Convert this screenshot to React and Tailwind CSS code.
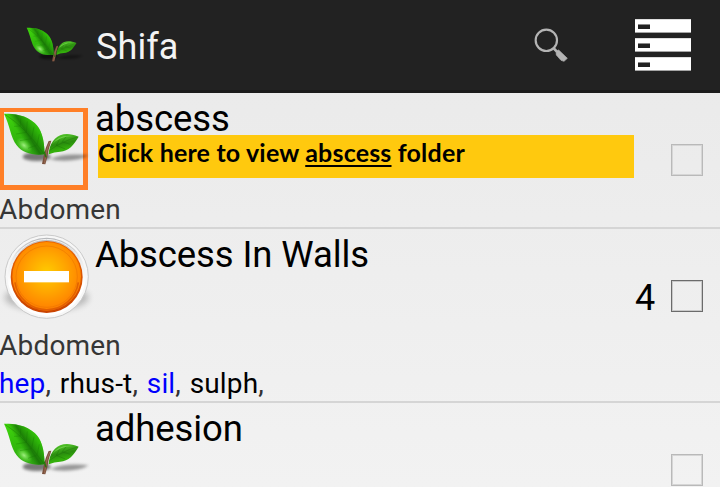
import React, { useId } from 'react';

const roboto = "font-['Roboto',sans-serif]";

const BIG_LEAF =
  'M12 17C44 17 78 21 104 45C124 64 133 92 134 139C96 143 68 135 50 112C32 89 29 50 12 17Z';

function Leaves({ className }) {
  const id = useId();
  return (
    <svg viewBox="0 0 270 180" className={className} aria-hidden="true">
      <defs>
        <linearGradient id={id + 'big'} x1="0.2" y1="0" x2="0.6" y2="1">
          <stop offset="0" stopColor="#3fd50c" />
          <stop offset="0.45" stopColor="#33bb0c" />
          <stop offset="1" stopColor="#2fa812" />
        </linearGradient>
        <linearGradient id={id + 'edge'} x1="0.15" y1="0.75" x2="0.85" y2="0.3">
          <stop offset="0.4" stopColor="#167205" stopOpacity="0" />
          <stop offset="0.6" stopColor="#126405" stopOpacity="0.7" />
          <stop offset="1" stopColor="#35d307" stopOpacity="0.6" />
        </linearGradient>
        <radialGradient id={id + 'shine'}>
          <stop offset="0" stopColor="#a6f287" stopOpacity="0.95" />
          <stop offset="1" stopColor="#63dc36" stopOpacity="0" />
        </radialGradient>
        <linearGradient id={id + 'small'} x1="0.2" y1="0" x2="0.5" y2="1">
          <stop offset="0" stopColor="#58cf2c" />
          <stop offset="0.5" stopColor="#2a8d0e" />
          <stop offset="0.8" stopColor="#35b30b" />
          <stop offset="1" stopColor="#248408" />
        </linearGradient>
        <filter id={id + 'blur'} x="-20%" y="-60%" width="140%" height="220%">
          <feGaussianBlur stdDeviation="5" />
        </filter>
      </defs>
      <g filter={`url(#${id}blur)`} fill="#000">
        <ellipse cx="110" cy="146" rx="42" ry="13" opacity="0.5" />
        <path d="M150 153Q195 134 266 142Q235 162 168 157Z" opacity="0.38" />
      </g>
      <path d={BIG_LEAF} fill={`url(#${id}big)`} />
      <path d={BIG_LEAF} fill={`url(#${id}edge)`} />
      <ellipse cx="72" cy="112" rx="29" ry="18" transform="rotate(42 72 112)" fill={`url(#${id}shine)`} />
      <g fill="none" stroke="#157005" strokeWidth="1.5" opacity="0.6">
        <path d="M16 20Q75 57 132 138" strokeWidth="2" />
        <path d="M61 54L62 32M79 73L82 40M95 92L102 56M111 111L118 79M61 54L42 55M79 73L49 78M95 92L60 98M111 111L84 121" />
      </g>
      <path d="M126 168L131 143Q136 119 146 99L154 98Q145 123 142 147L136 169Z" fill="#79503c" />
      <path d="M134 166Q137 127 150 101" stroke="#b17b61" strokeWidth="2" fill="none" />
      <path d="M147 128C155 89 185 64 236 86C221 111 207 129 180 131Q163 132 146 139Z" fill={`url(#${id}small)`} />
      <path d="M149 127Q187 99 233 87M169 112L181 89M185 103L200 84M169 112L196 123M188 102L211 109" stroke="#18680a" strokeWidth="1.6" fill="none" opacity="0.65" />
      <path d="M157 108Q175 79 220 84Q182 84 157 108Z" fill="#82df5e" opacity="0.65" />
      <path d="M133 131L138 148" stroke="#237a0c" strokeWidth="4" />
    </svg>
  );
}

function MinusBadge() {
  return (
    <svg viewBox="0 0 282 282" className="block h-[94px] w-[94px] max-w-none" aria-hidden="true">
      <defs>
        <radialGradient id="orange" cx="0.5" cy="0.45" r="0.56">
          <stop offset="0" stopColor="#ffcc00" />
          <stop offset="0.5" stopColor="#ffa600" />
          <stop offset="1" stopColor="#ff7c00" />
        </radialGradient>
        <linearGradient id="silver" x1="0" y1="0" x2="0" y2="1">
          <stop offset="0" stopColor="#b4b6b9" />
          <stop offset="0.25" stopColor="#e9e9e9" />
          <stop offset="0.6" stopColor="#ffffff" />
        </linearGradient>
        <linearGradient id="rim" x1="0" y1="0" x2="0" y2="1">
          <stop offset="0" stopColor="#ea6500" />
          <stop offset="1" stopColor="#c94300" />
        </linearGradient>
        <filter id="soft" x="-20%" y="-50%" width="140%" height="200%">
          <feGaussianBlur stdDeviation="9" />
        </filter>
      </defs>
      <ellipse cx="140" cy="206" rx="126" ry="40" fill="#000" opacity="0.22" filter="url(#soft)" />
      <circle cx="140" cy="143" r="125" fill="#f7f7f7" stroke="#cacaca" strokeWidth="3" />
      <circle cx="140" cy="143" r="117" fill="url(#silver)" />
      <path d="M49 78A112 112 0 0 1 231 78" fill="none" stroke="#f4f4f4" strokeWidth="3" />
      <circle cx="140" cy="144" r="108" fill="url(#rim)" />
      <circle cx="140" cy="142" r="103" fill="url(#orange)" />
      <path d="M45 160A96 96 0 0 0 235 160" fill="none" stroke="#cf4a00" strokeWidth="5" opacity="0.6" />
      <circle cx="140" cy="143" r="92" fill="none" stroke="#e87000" strokeWidth="3" opacity="0.5" />
      <rect x="72" y="126" width="135" height="34" fill="#fff" />
    </svg>
  );
}

function Check({ active }) {
  return (
    <span
      role="checkbox"
      aria-checked="false"
      className={
        active
          ? 'block h-8 w-8 shrink-0 border border-[#6b6b6b] shadow-[inset_0_0_0_1px_#c9c9c9]'
          : 'block h-8 w-8 shrink-0 border border-[#b9b9b9] shadow-[inset_0_0_0_1px_#d6d6d6]'
      }
    />
  );
}

function SearchIcon() {
  return (
    <svg viewBox="0 0 102 102" className="h-[34px] w-[34px]" aria-hidden="true">
      <circle cx="37" cy="37" r="32" fill="none" stroke="#b4b4b4" strokeWidth="6.5" />
      <path d="M58 60L68 70" stroke="#b4b4b4" strokeWidth="8" />
      <path d="M66 70L74 66L100 91L90 100L81 97L67 81Z" fill="#b4b4b4" stroke="#b4b4b4" strokeWidth="2" strokeLinejoin="round" />
    </svg>
  );
}

function MenuIcon() {
  return (
    <div className="flex flex-col gap-[5px]">
      {[0, 1, 2].map((i) => (
        <div key={i} className="h-[14px] w-14 border-y border-t-[#dedede] border-b-[#a5a5a5] bg-white pt-1 pl-[3px]">
          <div className="h-[5px] w-3 border-t border-[#8a8a8a] bg-[#222]" />
        </div>
      ))}
    </div>
  );
}

export default function App() {
  return (
    <div className={`flex h-[487px] w-[720px] flex-col overflow-hidden bg-linear-to-b from-[#e9e9e9] to-[#f2f2f2] text-black ${roboto}`}>
      <header className="flex h-[93px] shrink-0 items-start border-b-3 border-[#1b1b1b] bg-[#222]">
        <Leaves className="ml-[24px] mt-[23.5px] h-10 w-[60px] shrink-0" />
        <h1 className="ml-[12px] mt-[25px] w-[438px] text-[36px] leading-[44px] tracking-[0.1px] text-[#f3f3f3]">Shifa</h1>
        <div className="mt-[28px]"><SearchIcon /></div>
        <div className="ml-[67px] mt-[19px]"><MenuIcon /></div>
      </header>

      <section className="flex h-[136px] shrink-0 flex-col border-b-2 border-[#d5d5d5]">
        <div className="flex h-[99px] shrink-0 items-start">
          <div className="mt-[15px] h-[82px] w-[88px] shrink-0 border-4 border-r-5 border-b-5 border-[#ff7f27]">
            <Leaves className="-ml-1 -mt-[4px] h-[60px] w-[90px] max-w-none" />
          </div>
          <div className="ml-[7px] w-[540px]">
            <h2 className="mt-[4px] h-[38px] text-[36.5px] leading-[44px] tracking-[-0.1px]">abscess</h2>
            <p className="ml-[3px] h-[43px] w-[536px] bg-[#ffc90e] font-['Lato',sans-serif] text-[25px] leading-[34px] font-bold tracking-[0.18px] whitespace-nowrap">
              Click here to view <span className="underline decoration-2 underline-offset-3">abscess</span> folder
            </p>
          </div>
          <div className="ml-[36px] mt-[51px]"><Check /></div>
        </div>
        <div className="-ml-px text-[28px] leading-[36px] tracking-[0.2px] text-[#363636]">Abdomen</div>
      </section>

      <section className="flex h-[174px] shrink-0 flex-col border-b-2 border-[#d5d5d5]">
        <div className="flex h-[99px] shrink-0 items-start">
          <div className="w-[90px]"><MinusBadge /></div>
          <h2 className="ml-[5px] mt-[4px] w-[540px] text-[36.5px] leading-[44px] tracking-[-0.1px]">Abscess In Walls</h2>
          <div className="mt-[47px] w-[21px] text-[36px] leading-[44px]">4</div>
          <div className="ml-[15px] mt-[51px]"><Check active /></div>
        </div>
        <div className="-ml-px text-[28px] leading-[36px] tracking-[0.2px] text-[#363636]">Abdomen</div>
        <div className="-ml-px mt-[2px] text-[28px] leading-[36px] tracking-[0.15px] [word-spacing:1.6px] text-[#333]">
          <span className="text-[#0000fe]">hep</span>, <span className="text-black">rhus-t</span>,{' '}
          <span className="text-[#0000fe]">sil</span>, <span className="text-black">sulph</span>,
        </div>
      </section>

      <section className="flex h-[84px] items-start overflow-hidden">
        <Leaves className="mt-[15px] h-[60px] w-[90px] shrink-0" />
        <h2 className="ml-[5px] mt-[4px] w-[576px] text-[36.5px] leading-[44px] tracking-[-0.1px]">adhesion</h2>
        <div className="mt-[51px]"><Check /></div>
      </section>
    </div>
  );
}
